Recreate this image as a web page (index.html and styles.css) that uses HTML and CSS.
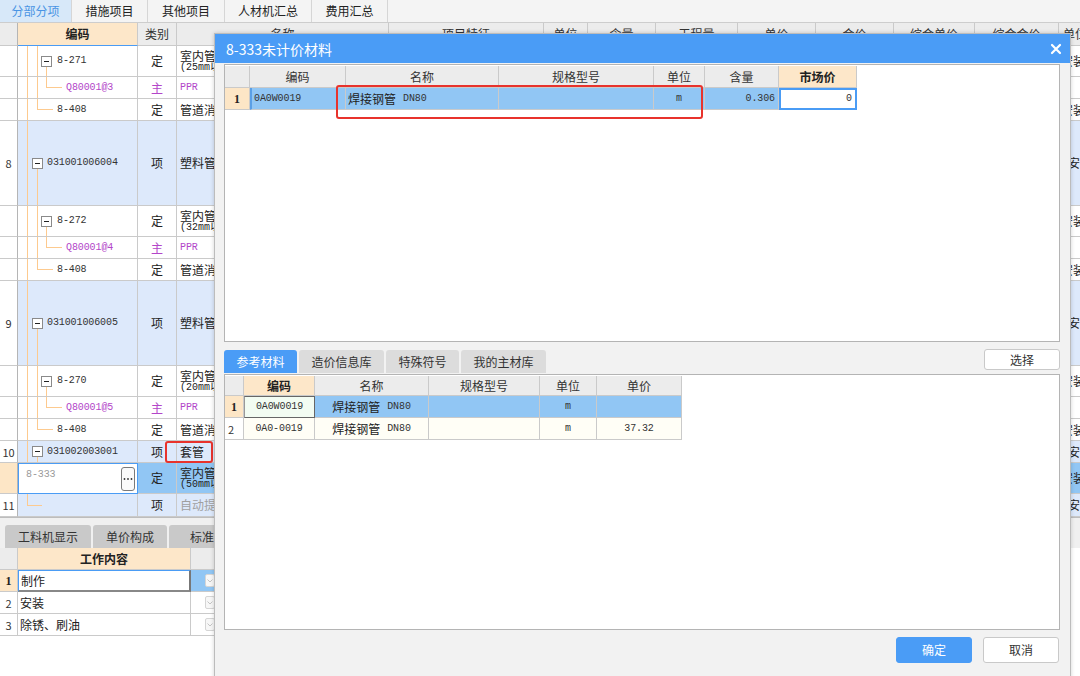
FILE: index.html
```html
<!DOCTYPE html>
<html lang="zh">
<head>
<meta charset="utf-8">
<title>8-333未计价材料</title>
<link rel="stylesheet" href="styles.css">
</head>
<body>
<div class="app">
  <div class="tabbar">
    <div class="tab w72 active">分部分项</div>
    <div class="tab w76">措施项目</div>
    <div class="tab w77">其他项目</div>
    <div class="tab w87">人材机汇总</div>
    <div class="tab w76">费用汇总</div>
  </div>

  <div class="grid maingrid">
    <div class="row hdr h23">
      <div class="c m0"></div>
      <div class="c m1 hsel">编码</div>
      <div class="c m2">类别</div>
      <div class="c m3">名称</div>
      <div class="c m4">项目特征</div>
      <div class="c m5">单位</div>
      <div class="c m6">含量</div>
      <div class="c m7">工程量</div>
      <div class="c m8">单价</div>
      <div class="c m9">合价</div>
      <div class="c m10">综合单价</div>
      <div class="c m11">综合合价</div>
      <div class="c m12 left">单位</div>
    </div>

    <!-- 8-271 -->
    <div class="row h31">
      <div class="c m0"></div>
      <div class="c m1 t-l2"><span class="box"></span><span class="mono">8-271</span></div>
      <div class="c m2 ctr">定</div>
      <div class="c m3 name2"><span>室内管道 塑料给水管(热熔连接)</span><span class="sub">(25mm以内)</span></div>
      <div class="c m4"></div><div class="c m5"></div><div class="c m6"></div><div class="c m7"></div><div class="c m8"></div><div class="c m9"></div><div class="c m10"></div><div class="c m11"></div>
      <div class="c m12 fee">安装工程</div>
    </div>
    <div class="row h22">
      <div class="c m0"></div>
      <div class="c m1 t-q"><span class="mono purple">Q80001@3</span></div>
      <div class="c m2 ctr purple">主</div>
      <div class="c m3"><span class="mono purple">PPR</span></div>
      <div class="c m4"></div><div class="c m5"></div><div class="c m6"></div><div class="c m7"></div><div class="c m8"></div><div class="c m9"></div><div class="c m10"></div><div class="c m11"></div>
      <div class="c m12"></div>
    </div>
    <div class="row h22">
      <div class="c m0"></div>
      <div class="c m1 t-e"><span class="mono">8-408</span></div>
      <div class="c m2 ctr">定</div>
      <div class="c m3">管道消毒、冲洗</div>
      <div class="c m4"></div><div class="c m5"></div><div class="c m6"></div><div class="c m7"></div><div class="c m8"></div><div class="c m9"></div><div class="c m10"></div><div class="c m11"></div>
      <div class="c m12 fee">安装工程</div>
    </div>

    <!-- 8 -->
    <div class="row h85 blue">
      <div class="c m0 num">8</div>
      <div class="c m1 t-l1"><span class="box box1"></span><span class="mono">031001006004</span></div>
      <div class="c m2 ctr">项</div>
      <div class="c m3">塑料管</div>
      <div class="c m4"></div><div class="c m5"></div><div class="c m6"></div><div class="c m7"></div><div class="c m8"></div><div class="c m9"></div><div class="c m10"></div><div class="c m11"></div>
      <div class="c m12 fee2">安装工程</div>
    </div>
    <div class="row h31">
      <div class="c m0"></div>
      <div class="c m1 t-l2"><span class="box"></span><span class="mono">8-272</span></div>
      <div class="c m2 ctr">定</div>
      <div class="c m3 name2"><span>室内管道 塑料给水管(热熔连接)</span><span class="sub">(32mm以内)</span></div>
      <div class="c m4"></div><div class="c m5"></div><div class="c m6"></div><div class="c m7"></div><div class="c m8"></div><div class="c m9"></div><div class="c m10"></div><div class="c m11"></div>
      <div class="c m12 fee">安装工程</div>
    </div>
    <div class="row h22">
      <div class="c m0"></div>
      <div class="c m1 t-q"><span class="mono purple">Q80001@4</span></div>
      <div class="c m2 ctr purple">主</div>
      <div class="c m3"><span class="mono purple">PPR</span></div>
      <div class="c m4"></div><div class="c m5"></div><div class="c m6"></div><div class="c m7"></div><div class="c m8"></div><div class="c m9"></div><div class="c m10"></div><div class="c m11"></div>
      <div class="c m12"></div>
    </div>
    <div class="row h22">
      <div class="c m0"></div>
      <div class="c m1 t-e"><span class="mono">8-408</span></div>
      <div class="c m2 ctr">定</div>
      <div class="c m3">管道消毒、冲洗</div>
      <div class="c m4"></div><div class="c m5"></div><div class="c m6"></div><div class="c m7"></div><div class="c m8"></div><div class="c m9"></div><div class="c m10"></div><div class="c m11"></div>
      <div class="c m12 fee">安装工程</div>
    </div>

    <!-- 9 -->
    <div class="row h85 blue">
      <div class="c m0 num">9</div>
      <div class="c m1 t-l1"><span class="box box1"></span><span class="mono">031001006005</span></div>
      <div class="c m2 ctr">项</div>
      <div class="c m3">塑料管</div>
      <div class="c m4"></div><div class="c m5"></div><div class="c m6"></div><div class="c m7"></div><div class="c m8"></div><div class="c m9"></div><div class="c m10"></div><div class="c m11"></div>
      <div class="c m12 fee2">安装工程</div>
    </div>
    <div class="row h31">
      <div class="c m0"></div>
      <div class="c m1 t-l2"><span class="box"></span><span class="mono">8-270</span></div>
      <div class="c m2 ctr">定</div>
      <div class="c m3 name2"><span>室内管道 塑料给水管(热熔连接)</span><span class="sub">(20mm以内)</span></div>
      <div class="c m4"></div><div class="c m5"></div><div class="c m6"></div><div class="c m7"></div><div class="c m8"></div><div class="c m9"></div><div class="c m10"></div><div class="c m11"></div>
      <div class="c m12 fee">安装工程</div>
    </div>
    <div class="row h22">
      <div class="c m0"></div>
      <div class="c m1 t-q"><span class="mono purple">Q80001@5</span></div>
      <div class="c m2 ctr purple">主</div>
      <div class="c m3"><span class="mono purple">PPR</span></div>
      <div class="c m4"></div><div class="c m5"></div><div class="c m6"></div><div class="c m7"></div><div class="c m8"></div><div class="c m9"></div><div class="c m10"></div><div class="c m11"></div>
      <div class="c m12"></div>
    </div>
    <div class="row h22">
      <div class="c m0"></div>
      <div class="c m1 t-e"><span class="mono">8-408</span></div>
      <div class="c m2 ctr">定</div>
      <div class="c m3">管道消毒、冲洗</div>
      <div class="c m4"></div><div class="c m5"></div><div class="c m6"></div><div class="c m7"></div><div class="c m8"></div><div class="c m9"></div><div class="c m10"></div><div class="c m11"></div>
      <div class="c m12 fee">安装工程</div>
    </div>

    <!-- 10 -->
    <div class="row h22 blue">
      <div class="c m0 num">10</div>
      <div class="c m1 t-l1"><span class="box box1"></span><span class="mono">031002003001</span></div>
      <div class="c m2 ctr">项</div>
      <div class="c m3">套管</div>
      <div class="c m4"></div><div class="c m5"></div><div class="c m6"></div><div class="c m7"></div><div class="c m8"></div><div class="c m9"></div><div class="c m10"></div><div class="c m11"></div>
      <div class="c m12 fee2">安装工程</div>
    </div>
    <div class="row h31 edit">
      <div class="c m0 rn-sel"></div>
      <div class="c m1 editor"><span class="ed-text mono">8-333</span><span class="ed-btn"><svg width="10" height="4" viewBox="0 0 10 4"><circle cx="1.5" cy="2" r="0.9" fill="#333"/><circle cx="5" cy="2" r="0.9" fill="#333"/><circle cx="8.5" cy="2" r="0.9" fill="#333"/></svg></span></div>
      <div class="c m2 ctr">定</div>
      <div class="c m3 name2"><span>室内管道 钢套管制作安装</span><span class="sub">(50mm以内)</span></div>
      <div class="c m4"></div><div class="c m5"></div><div class="c m6"></div><div class="c m7"></div><div class="c m8"></div><div class="c m9"></div><div class="c m10"></div><div class="c m11"></div>
      <div class="c m12 fee">安装工程</div>
    </div>
    <div class="row h23 blue">
      <div class="c m0 num">11</div>
      <div class="c m1 t-last"></div>
      <div class="c m2 ctr">项</div>
      <div class="c m3 hint">自动提示：请输入清单简称</div>
      <div class="c m4"></div><div class="c m5"></div><div class="c m6"></div><div class="c m7"></div><div class="c m8"></div><div class="c m9"></div><div class="c m10"></div><div class="c m11"></div>
      <div class="c m12 fee2">安装工程</div>
    </div>
  </div>

  <div class="lower">
    <div class="ltabbar">
      <div class="ltab lw86">工料机显示</div>
      <div class="ltab lw74">单价构成</div>
      <div class="ltab lw90">标准换算</div>
      <div class="ltab lw80">换算信息</div>
    </div>
    <div class="grid">
      <div class="row hdr h22">
        <div class="c k0"></div>
        <div class="c k1 hsel2">工作内容</div>
        <div class="c k2">输出</div>
      </div>
      <div class="row h22">
        <div class="c k0 rn-sel">1</div>
        <div class="c k1 cell-edit">制作</div>
        <div class="c k2 selb"><span class="dd"><svg width="6" height="4" viewBox="0 0 6 4"><path d="M0.5 0.5 L3 3 L5.5 0.5" stroke="#c4c4c4" fill="none"/></svg></span></div>
      </div>
      <div class="row h22">
        <div class="c k0 num">2</div>
        <div class="c k1">安装</div>
        <div class="c k2"><span class="dd"><svg width="6" height="4" viewBox="0 0 6 4"><path d="M0.5 0.5 L3 3 L5.5 0.5" stroke="#c4c4c4" fill="none"/></svg></span></div>
      </div>
      <div class="row h22">
        <div class="c k0 num">3</div>
        <div class="c k1">除锈、刷油</div>
        <div class="c k2"><span class="dd"><svg width="6" height="4" viewBox="0 0 6 4"><path d="M0.5 0.5 L3 3 L5.5 0.5" stroke="#c4c4c4" fill="none"/></svg></span></div>
      </div>
    </div>
  </div>

  <div class="redbox rb-main"></div>
</div>

<div class="dialog">
  <div class="dtitle">
    <span>8-333未计价材料</span>
    <svg class="close" width="12" height="12" viewBox="0 0 12 12"><path d="M2 2 L10 10 M10 2 L2 10" stroke="#fff" stroke-width="2.2" stroke-linecap="round" fill="none"/></svg>
  </div>
  <div class="dbody">
    <div class="gbox upper">
      <div class="row hdr h22">
        <div class="c u0"></div>
        <div class="c u1">编码</div>
        <div class="c u2">名称</div>
        <div class="c u3">规格型号</div>
        <div class="c u4">单位</div>
        <div class="c u5">含量</div>
        <div class="c u6 hsel2">市场价</div>
      </div>
      <div class="row h22">
        <div class="c u0 rn-sel">1</div>
        <div class="c u1 selb mark"><span class="mono">0A0W0019</span></div>
        <div class="c u2 selb"><span>焊接钢管</span><span class="mono dn">DN80</span></div>
        <div class="c u3 selb"></div>
        <div class="c u4 selb ctr"><span class="mono">m</span></div>
        <div class="c u5 selb right"><span class="mono">0.306</span></div>
        <div class="c u6 cur right"><span class="mono">0</span></div>
      </div>
      <div class="redbox rb-dlg"></div>
    </div>

    <div class="dtabrow">
      <div class="dtabs">
        <div class="dtab active dw73">参考材料</div>
        <div class="dtab dw85">造价信息库</div>
        <div class="dtab dw73">特殊符号</div>
        <div class="dtab dw85">我的主材库</div>
      </div>
      <div class="btn selbtn">选择</div>
    </div>

    <div class="gbox lowerg">
      <div class="row hdr h20">
        <div class="c l0"></div>
        <div class="c l1 hsel2">编码</div>
        <div class="c l2">名称</div>
        <div class="c l3">规格型号</div>
        <div class="c l4">单位</div>
        <div class="c l5">单价</div>
      </div>
      <div class="row h22">
        <div class="c l0 rn-sel">1</div>
        <div class="c l1 ctr curcell"><span class="mono">0A0W0019</span></div>
        <div class="c l2 ctr selb"><span>焊接钢管</span><span class="mono dn">DN80</span></div>
        <div class="c l3 selb"></div>
        <div class="c l4 ctr selb"><span class="mono">m</span></div>
        <div class="c l5 selb"></div>
      </div>
      <div class="row h22 cream">
        <div class="c l0 num">2</div>
        <div class="c l1 ctr"><span class="mono">0A0-0019</span></div>
        <div class="c l2 ctr"><span>焊接钢管</span><span class="mono dn">DN80</span></div>
        <div class="c l3"></div>
        <div class="c l4 ctr"><span class="mono">m</span></div>
        <div class="c l5 ctr"><span class="mono">37.32</span></div>
      </div>
    </div>

    <div class="dfoot">
      <div class="btn primary">确定</div>
      <div class="btn">取消</div>
    </div>
  </div>
</div>
</body>
</html>
```

FILE: styles.css
```css
* { box-sizing: border-box; margin: 0; padding: 0; }
html, body { width: 1080px; height: 676px; overflow: hidden; }
body {
  background: #fff;
  font-family: "Noto Sans CJK SC", "Noto Sans", sans-serif;
  font-size: 12px;
  line-height: 14px;
  color: #222;
}
.app { position: relative; width: 1080px; height: 676px; overflow: hidden; }

.mono { font-family: "Liberation Mono", "Noto Sans CJK SC", monospace; font-size: 10px; letter-spacing: -0.1px; color: #333; }
.purple, .purple.mono { color: #b346c9; }
.dn { margin-left: 7px; }

/* top tabs */
.tabbar { display: flex; height: 23px; background: #f4f4f4; border-bottom: 1px solid #cdcdcd; }
.tab { display: flex; align-items: center; justify-content: center; border-right: 1px solid #d6d6d6; color: #222; font-size: 12px; }
.tab.active { background: #d7e8f9; color: #4a94e4; }
.w72 { width: 72px; } .w76 { width: 76px; } .w77 { width: 77px; } .w87 { width: 87px; }

/* grids */
.grid { width: 1100px; }
.row { display: flex; }
.c {
  flex: none;
  display: flex;
  align-items: center;
  overflow: hidden;
  white-space: nowrap;
  border-right: 1px solid #cacaca;
  border-bottom: 1px solid #cacaca;
  padding-left: 3px;
}
.ctr { justify-content: center; padding-left: 0; }
.right { justify-content: flex-end; padding-right: 3px; }
.hdr .c { background: #ececec; justify-content: center; padding-left: 0; color: #333; }
.hdr .c.left { justify-content: flex-start; padding-left: 4px; }
.hdr .c.hsel { background: #fde7c9; font-weight: bold; border-bottom: 1px solid #4a9cf5; color: #222; }
.hdr .c.hsel2 { background: #fde7c9; font-weight: bold; color: #222; }

.h20 { height: 20px; } .h22 { height: 22px; } .h23 { height: 23px; } .h31 { height: 31px; } .h85 { height: 85px; }

/* main columns */
.m0 { width: 18px; justify-content: center; padding-left: 0; border-right-color: #b5b5b5; }
.m1 { width: 120px; padding-left: 0; }
.m2 { width: 39px; }
.m3 { width: 212px; }
.m4 { width: 155px; } .m5 { width: 44px; } .m6 { width: 68px; } .m7 { width: 82px; }
.m8 { width: 78px; } .m9 { width: 78px; } .m10 { width: 81px; } .m11 { width: 84px; } .m12 { width: 80px; }
.num { font-size: 11px; color: #333; }
.blue .c:not(.m0) { background-color: #dde9fb; }
.hint { color: #a0a0a0; }
.fee { padding-left: 2px; }
.fee2 { padding-left: 9px; }

.name2 { flex-direction: column; align-items: flex-start; justify-content: center; line-height: 13px; }
.name2 .sub { font-family: "Liberation Mono", "Noto Sans CJK SC", monospace; font-size: 10px; line-height: 11px; }

/* tree lines */
.t-l2, .t-q, .t-e, .t-l1, .t-last { background-repeat: no-repeat; }
.t-l2 {
  background-image: linear-gradient(#fdca8f, #fdca8f), linear-gradient(#fdca8f, #fdca8f), linear-gradient(#fdca8f, #fdca8f);
  background-size: 1px 100%, 1px 100%, 1px 50%;
  background-position: 9px 0, 19px 0, 28px 100%;
}
.t-q {
  background-image: linear-gradient(#fdca8f, #fdca8f), linear-gradient(#fdca8f, #fdca8f), linear-gradient(#fdca8f, #fdca8f), linear-gradient(#fdca8f, #fdca8f);
  background-size: 1px 100%, 1px 100%, 1px 50%, 16px 1px;
  background-position: 9px 0, 19px 0, 28px 0, 28px 50%;
  padding-left: 48px;
}
.t-e {
  background-image: linear-gradient(#fdca8f, #fdca8f), linear-gradient(#fdca8f, #fdca8f), linear-gradient(#fdca8f, #fdca8f);
  background-size: 1px 100%, 1px 50%, 16px 1px;
  background-position: 9px 0, 19px 0, 19px 50%;
  padding-left: 39px;
}
.t-l1 {
  background-image: linear-gradient(#fdca8f, #fdca8f), linear-gradient(#fdca8f, #fdca8f);
  background-size: 1px 100%, 1px 50%;
  background-position: 9px 0, 19px 100%;
}
.t-last {
  background-image: linear-gradient(#fdca8f, #fdca8f), linear-gradient(#fdca8f, #fdca8f);
  background-size: 1px 50%, 15px 1px;
  background-position: 9px 0, 9px 50%;
}
.box {
  flex: none;
  width: 11px; height: 11px;
  margin-left: 23px; margin-right: 5px;
  border: 1px solid #8a8a8a;
  background: #fff;
  display: flex; align-items: center; justify-content: center;
}
.box::after { content: ""; width: 5px; height: 1px; background: #222; }
.box.box1 { margin-left: 14px; margin-right: 4px; }

/* edit row */
.edit .c:not(.m0):not(.m1) { background: #91c6f4; }
.rn-sel { background: #fde6c6; justify-content: center; padding-left: 0; font-family: "Liberation Serif", serif; font-weight: bold; font-size: 12px; }
.editor {
  border: 1px solid #4a9cf5;
  background: #fff;
  justify-content: space-between;
  align-items: flex-start;
  padding: 3px 2px 0 7px;
}
.ed-text.mono { color: #9a9a9a; margin-top: 1px; }
.ed-btn {
  flex: none;
  width: 14px; height: 24px;
  border: 1px solid #7a7a7a; border-radius: 3px;
  background: #fafafa;
  display: flex; align-items: center; justify-content: center;
}

/* annotation boxes */
.redbox { position: absolute; border: 2px solid #e8332c; border-radius: 3px; }
.rb-main { left: 165px; top: 441px; width: 48px; height: 22px; }

/* lower left panel */
.lower { height: 159px; }
.ltabbar {
  height: 31px; background: #f0f0f0; border-top: 1px solid #bdbdbd;
  display: flex; align-items: flex-end; gap: 2px; padding-left: 5px;
}
.ltab {
  height: 23px; background: #c9c9c9; border-radius: 3px 3px 0 0;
  display: flex; align-items: center; justify-content: center;
  font-size: 12px; color: #333;
}
.lw86 { width: 86px; } .lw74 { width: 74px; } .lw90 { width: 90px; } .lw80 { width: 80px; }
.k0 { width: 18px; justify-content: center; padding-left: 0; }
.k1 { width: 173px; padding-left: 2px; }
.k2 { width: 100px; padding-left: 14px; }
.cell-edit { border: 1px solid #4a9cf5; border-right: 2px solid #777; border-bottom: 2px solid #888; }
.selb { background: #91c6f4; }
.dd {
  width: 10px; height: 13px; border: 1px solid #d5d5d5; border-radius: 2px; background: #f7f7f7;
  display: flex; align-items: center; justify-content: center;
}

/* dialog */
.dialog {
  position: absolute; left: 214px; top: 33px;
  width: 857px; height: 660px;
  border: 1px solid #bcbcbc;
  background: #f2f2f2;
  box-shadow: 0 0 4px rgba(0,0,0,0.18);
  display: flex; flex-direction: column;
}
.dtitle {
  height: 29px; flex: none;
  background: #4a9cf6; color: #fff;
  font-size: 14px;
  display: flex; align-items: center; justify-content: space-between;
  padding: 0 8px 0 11px;
}
.dbody { padding: 1px 10px 0 9px; display: flex; flex-direction: column; }
.gbox { position: relative; background: #fff; border: 1px solid #b4b4b4; padding-top: 1px; }
.upper { height: 278px; }
.u0 { width: 25px; }
.u1 { width: 96px; padding-left: 2px; }
.u2 { width: 153px; padding-left: 2px; }
.u3 { width: 155px; }
.u4 { width: 51px; }
.u5 { width: 74px; }
.u6 { width: 78px; }
.mark { border-left: 2px solid #5a9fe6; }
.cur { border: 2px solid #4a9cf5; background: #fff; }
.rb-dlg { left: 111px; top: 20px; width: 367px; height: 34px; }

.dtabrow { height: 24px; margin-top: 7px; display: flex; justify-content: space-between; }
.dtabs { display: flex; align-items: flex-end; gap: 2px; }
.dtab {
  height: 23px; background: #dcdcdc; border-radius: 3px 3px 0 0;
  display: flex; align-items: center; justify-content: center; color: #333;
}
.dtab.active { background: #4a9cf6; color: #fff; }
.dw73 { width: 73px; } .dw85 { width: 85px; }
.btn {
  display: flex; align-items: center; justify-content: center;
  background: #fff; border: 1px solid #c9c9c9; border-radius: 3px; color: #333;
}
.selbtn { width: 76px; height: 21px; }
.lowerg { height: 256px; margin-top: 1px; }
.l0 { width: 19px; }
.l1 { width: 71px; }
.l2 { width: 114px; }
.l3 { width: 111px; }
.l4 { width: 57px; }
.l5 { width: 85px; }
.curcell { background: #f2fcf2; border: 1px solid #666; border-left-color: #999; }
.cream .c { background: #fffef6; }
.cream .c.l0 { background: #fff; }

.dfoot { margin-top: 7px; display: flex; justify-content: flex-end; gap: 11px; padding-right: 1px; }
.dfoot .btn { width: 76px; height: 26px; }
.btn.primary { background: #4a9cf6; border-color: #4a9cf6; color: #fff; }
```
